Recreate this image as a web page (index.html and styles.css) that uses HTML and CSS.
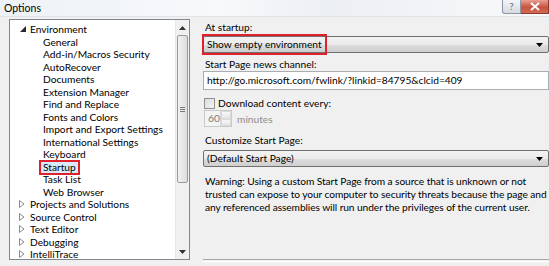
FILE: index.html
```html
<!DOCTYPE html>
<html lang="en">
<head>
  <meta charset="UTF-8" />
  <title>Options</title>
  <link rel="stylesheet" href="styles.css">
</head>
<body>
  <div class="titlebar">
    <span class="title">Options</span>
    <div class="caption-btns">
      <span class="btn-help">?</span>
      <span class="btn-close">
        <svg width="10" height="9" viewBox="0 0 10 9"><path d="M1 1 L9 8 M9 1 L1 8" stroke="#fff" stroke-width="2"/></svg>
      </span>
    </div>
  </div>

  <div class="main">
    <div class="tree">
      <ul class="nodes">
        <li class="node open">
          <svg class="arrow" width="6" height="6" viewBox="0 0 6 6"><path d="M6 0 L6 6 L0 6 Z" fill="#262626"/></svg>
          Environment
        </li>
        <li class="child">General</li>
        <li class="child">Add-in/Macros Security</li>
        <li class="child">AutoRecover</li>
        <li class="child">Documents</li>
        <li class="child">Extension Manager</li>
        <li class="child">Find and Replace</li>
        <li class="child">Fonts and Colors</li>
        <li class="child">Import and Export Settings</li>
        <li class="child">International Settings</li>
        <li class="child">Keyboard</li>
        <li class="child"><span class="selected">Startup</span></li>
        <li class="child">Task List</li>
        <li class="child">Web Browser</li>
        <li class="node"><svg class="arrow" width="6" height="8" viewBox="0 0 6 8"><path d="M0.5 0.5 L5 4 L0.5 7.5 Z" fill="none" stroke="#8a8a8a"/></svg>Projects and Solutions</li>
        <li class="node"><svg class="arrow" width="6" height="8" viewBox="0 0 6 8"><path d="M0.5 0.5 L5 4 L0.5 7.5 Z" fill="none" stroke="#8a8a8a"/></svg>Source Control</li>
        <li class="node"><svg class="arrow" width="6" height="8" viewBox="0 0 6 8"><path d="M0.5 0.5 L5 4 L0.5 7.5 Z" fill="none" stroke="#8a8a8a"/></svg>Text Editor</li>
        <li class="node"><svg class="arrow" width="6" height="8" viewBox="0 0 6 8"><path d="M0.5 0.5 L5 4 L0.5 7.5 Z" fill="none" stroke="#8a8a8a"/></svg>Debugging</li>
        <li class="node"><svg class="arrow" width="6" height="8" viewBox="0 0 6 8"><path d="M0.5 0.5 L5 4 L0.5 7.5 Z" fill="none" stroke="#8a8a8a"/></svg>IntelliTrace</li>
      </ul>
      <div class="vscroll">
        <div class="sb-btn"><svg width="7" height="4" viewBox="0 0 7 4"><path d="M0 4 L3.5 0 L7 4 Z" fill="#333"/></svg></div>
        <div class="sb-thumb"><span class="grip"></span></div>
        <div class="sb-track"></div>
        <div class="sb-btn"><svg width="7" height="4" viewBox="0 0 7 4"><path d="M0 0 L3.5 4 L7 0 Z" fill="#333"/></svg></div>
      </div>
    </div>

    <div class="panel">
      <div class="label">At startup:</div>
      <div class="combo marked">
        <span>Show empty environment</span>
        <svg class="drop" width="7" height="4" viewBox="0 0 7 4"><path d="M0 0 L3.5 4 L7 0 Z" fill="#000"/></svg>
        <span class="mark"></span>
      </div>

      <div class="label gap">Start Page news channel:</div>
      <div class="textbox">http://go.microsoft.com/fwlink/?linkid=84795&amp;clcid=409</div>

      <div class="check-row">
        <span class="checkbox"></span>
        <span>Download content every:</span>
      </div>
      <div class="spin-row">
        <div class="spin">
          <span class="spin-value">60</span>
          <span class="spin-btns">
            <span class="spin-up"></span>
            <span class="spin-down"></span>
          </span>
        </div>
        <span class="unit">minutes</span>
      </div>

      <div class="label gap2">Customize Start Page:</div>
      <div class="combo">
        <span>(Default Start Page)</span>
        <svg class="drop" width="7" height="4" viewBox="0 0 7 4"><path d="M0 0 L3.5 4 L7 0 Z" fill="#000"/></svg>
      </div>

      <p class="warning">Warning: Using a custom Start Page from a source that is unknown or not<br>trusted can expose to your computer to security threats because the page and<br>any referenced assemblies will run under the privileges of the current user.</p>

      <div class="groove"></div>
    </div>
  </div>
</body>
</html>
```

FILE: styles.css
```css
body { margin: 0; background: #f0f0f0; font-family: Lato, "Open Sans", sans-serif; font-size: 10.2px; color: #000; overflow: hidden; width: 549px; height: 266px; }

.titlebar { height: 16px; display: flex; justify-content: space-between; align-items: flex-start; background: linear-gradient(90deg, #eef2f6, #f7f9fb 40%, #eceff3 60%, #f8f9fb); border-bottom: 1px solid #dfe3e8; }
.title { padding: 1px 0 0 4px; line-height: 14px; font-size: 10.5px; }
.caption-btns { display: flex; }
.btn-help { width: 17px; height: 13px; border: 1px solid #8b95a3; border-top: none; border-radius: 0 0 0 3px; background: linear-gradient(#f3f5f8, #d6dbe2); color: #6a7380; font-size: 10px; line-height: 12px; text-align: center; }
.btn-close { width: 27px; height: 13px; border: 1px solid #8a3a30; border-top: none; border-left: none; background: linear-gradient(#e8a093, #c7533f 55%, #d46a52); display: flex; align-items: center; justify-content: center; }

.main { display: flex; height: 249px; }

.tree { flex: none; margin: 2px 0 0 9px; width: 179px; height: 239px; border: 1px solid #828790; background: #fff; display: flex; }
.nodes { list-style: none; margin: 0; padding: 3px 0 0 0; flex: 1; }
.nodes li { height: 12.5px; line-height: 12.5px; white-space: nowrap; }
.node { display: flex; align-items: center; padding-left: 9px; }
.node .arrow { margin-right: 5px; }
.node.open .arrow { margin-right: 4px; margin-left: 1px; }
.child { padding-left: 33px; }
.selected { display: inline-block; vertical-align: top; margin: -1px 0 0 -4px; padding: 0 2px 0 2px; height: 11px; line-height: 11px; border: 2px solid #e0202a; background: #d7e9fb; }

.vscroll { width: 13px; display: flex; flex-direction: column; background: #f0f0f0; border-left: 1px solid #e6e6e6; }
.sb-btn { height: 15px; display: flex; align-items: center; justify-content: center; }
.sb-thumb { height: 146px; margin: 0 1px; border: 1px solid #9a9a9a; border-radius: 2px; background: linear-gradient(90deg, #f1f1f1, #dcdcdc); display: flex; align-items: center; justify-content: center; }
.grip { width: 5px; height: 5px; background: repeating-linear-gradient(#7a7a7a 0 1px, transparent 1px 2px); }
.sb-track { flex: 1; }

.panel { flex: 1; min-width: 0; overflow: hidden; padding: 4px 0 0 13px; display: flex; flex-direction: column; }
.label { line-height: 13px; padding-left: 2px; }
.label.gap { margin-top: 5px; }
.label.gap2 { margin-top: 7px; }

.combo { position: relative; margin-top: 2px; height: 15px; border: 1px solid #707070; border-radius: 2px; background: linear-gradient(#f2f2f2, #ebebeb 50%, #dddddd 51%, #cfcfcf); display: flex; align-items: center; justify-content: space-between; padding: 0 4px 0 3px; line-height: 15px; }
.combo .drop { margin-right: 1px; }
.mark { position: absolute; left: -2px; top: -3px; width: 121px; height: 17px; border: 2px solid #e0202a; }

.textbox { height: 17px; line-height: 17px; border: 1px solid #abadb3; background: #fff; padding-left: 3px; white-space: nowrap; overflow: hidden; }

.check-row { margin-top: 7px; display: flex; align-items: center; gap: 3px; line-height: 12px; }
.checkbox { width: 9px; height: 9px; border: 1px solid #8f8f8f; background: linear-gradient(135deg, #dcdcdc, #f4f4f4); margin-left: 1px; }

.spin-row { margin-top: 1px; display: flex; align-items: center; gap: 5px; padding-left: 1px; }
.spin { width: 26px; height: 15px; border: 1px solid #c9c9c9; background: #f4f4f4; display: flex; justify-content: space-between; }
.spin-value { color: #7a7a7a; padding-left: 3px; line-height: 15px; }
.spin-btns { width: 12px; display: flex; flex-direction: column; border-left: 1px solid #d6d6d6; }
.spin-up, .spin-down { flex: 1; background: linear-gradient(#f7f7f7, #e6e6e6); border: 1px solid #dadada; }
.unit { color: #8d8d8d; }

.label.gap2 + .combo { margin-top: 3px; }

.warning { margin: 8px 0 0 0; padding-left: 2px; line-height: 13px; white-space: nowrap; letter-spacing: -0.08px; }

.groove { margin-top: auto; margin-bottom: 4px; height: 1px; border-top: 1px solid #a8a8a8; border-bottom: 1px solid #fff; }
```
